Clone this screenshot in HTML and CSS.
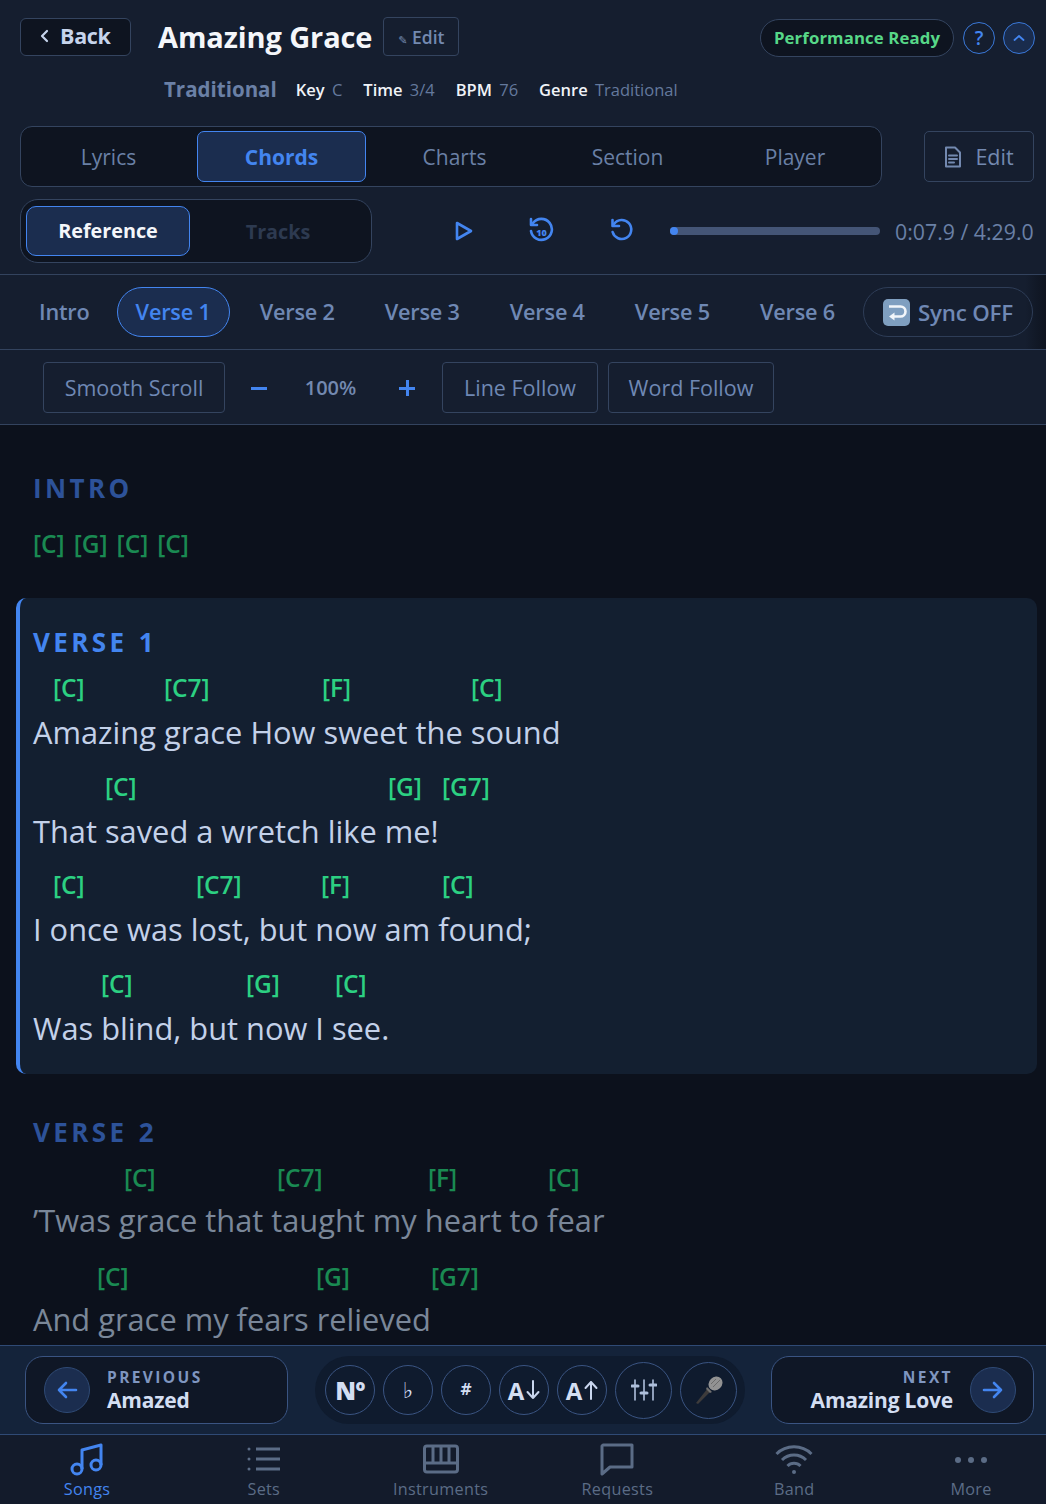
FILE: index.html
```html
<!DOCTYPE html>
<html><head>
<meta charset="utf-8">
<title>Amazing Grace</title>
<link rel="stylesheet" href="styles.css">
</head>
<body>
<div class="app">
  <header class="top">
    <div class="title-row">
      <button class="back-btn">
        <svg width="12" height="14" viewBox="0 0 12 14"><path d="M8 2 L3 7 L8 12" class="line-light"/></svg>
        Back
      </button>
      <h1 class="song-title">Amazing Grace</h1>
      <button class="title-edit"><span class="pencil">✎</span> Edit</button>
      <div class="title-right">
        <span class="ready-pill">Performance Ready</span>
        <button class="round-btn">?</button>
        <button class="round-btn round-fill">
          <svg width="14" height="10" viewBox="0 0 14 10"><path d="M2.5 7 L7 3 L11.5 7" class="line-blue line-fine"/></svg>
        </button>
      </div>
    </div>
    <div class="meta-row">
      <span class="artist">Traditional</span>
      <span class="meta"><b>Key</b> C</span>
      <span class="meta"><b>Time</b> 3/4</span>
      <span class="meta"><b>BPM</b> 76</span>
      <span class="meta"><b>Genre</b> Traditional</span>
    </div>
    <div class="tabs-row">
      <nav class="tabs">
        <a class="tab">Lyrics</a>
        <a class="tab active">Chords</a>
        <a class="tab">Charts</a>
        <a class="tab">Section</a>
        <a class="tab">Player</a>
      </nav>
      <button class="doc-edit">
        <svg width="18" height="22" viewBox="0 0 18 22"><path d="M2 1.5 H11 L16 6.5 V20.5 H2 Z M5 9.5 H13 M5 13 H13 M5 16.5 H10" class="line-muted"/></svg>
        Edit
      </button>
    </div>
    <div class="player-row">
      <div class="source-switch">
        <a class="source active">Reference</a>
        <a class="source">Tracks</a>
      </div>
      <div class="transport">
        <svg class="play" width="20" height="20" viewBox="0 0 20 20"><path d="M3 2 L17 10 L3 18 Z" class="line-blue"/></svg>
        <svg class="skip" width="26" height="28" viewBox="0 0 26 28">
          <path d="M5 6 A10.5 10.5 0 1 1 3 14" class="line-blue"/>
          <path d="M3 2 V8 H9" class="line-blue"/>
          <text x="13.5" y="18.5" class="skip-num">10</text>
        </svg>
        <svg class="undo" width="26" height="26" viewBox="0 0 26 26">
          <path d="M5 6 A9.5 9.5 0 1 1 3.6 14" class="line-blue"/>
          <path d="M3.5 2 V8 H10" class="line-blue"/>
        </svg>
      </div>
      <div class="progress"><span class="progress-dot"></span></div>
      <span class="time">0:07.9 / 4:29.0</span>
    </div>
  </header>

  <nav class="sections">
    <a class="section-link">Intro</a>
    <a class="section-link active">Verse 1</a>
    <a class="section-link">Verse 2</a>
    <a class="section-link">Verse 3</a>
    <a class="section-link">Verse 4</a>
    <a class="section-link">Verse 5</a>
    <a class="section-link">Verse 6</a>
    <button class="sync-btn">
      <svg width="27" height="27" viewBox="0 0 27 27">
        <rect width="27" height="27" rx="5" fill="#7f9fc0"/>
        <path d="M6 7.5 H17.5 A5 5 0 0 1 17.5 17.5 H8" fill="none" stroke="#f2f6fa" stroke-width="2.6"/>
        <path d="M11.5 13.5 L6 17.5 L11.5 21.5 Z M6 4 V11" fill="#f2f6fa"/>
      </svg>
      Sync OFF
    </button>
  </nav>

  <div class="scroll-tools">
    <button class="tool-btn tool-smooth">Smooth Scroll</button>
    <span class="step minus"></span>
    <span class="zoom-val">100%</span>
    <span class="step plus"></span>
    <button class="tool-btn tool-line">Line Follow</button>
    <button class="tool-btn tool-word">Word Follow</button>
  </div>

  <main class="sheet">
    <section class="block block-intro">
      <h2 class="block-name">INTRO</h2>
      <div class="intro-chords"><span>[C]</span><span>[G]</span><span>[C]</span><span>[C]</span></div>
    </section>

    <section class="block block-current">
      <h2 class="block-name">VERSE 1</h2>
      <div class="line">
        <div class="chords"><span style="margin-left:20px;width:111px">[C]</span><span style="width:158px">[C7]</span><span style="width:149px">[F]</span><span>[C]</span></div>
        <p class="lyric">Amazing grace How sweet the sound</p>
      </div>
      <div class="line">
        <div class="chords"><span style="margin-left:72px;width:283px">[C]</span><span style="width:54px">[G]</span><span>[G7]</span></div>
        <p class="lyric">That saved a wretch like me!</p>
      </div>
      <div class="line">
        <div class="chords"><span style="margin-left:20px;width:143px">[C]</span><span style="width:125px">[C7]</span><span style="width:121px">[F]</span><span>[C]</span></div>
        <p class="lyric">I once was lost, but now am found;</p>
      </div>
      <div class="line">
        <div class="chords"><span style="margin-left:68px;width:145px">[C]</span><span style="width:89px">[G]</span><span>[C]</span></div>
        <p class="lyric">Was blind, but now I see.</p>
      </div>
    </section>

    <section class="block block-next">
      <h2 class="block-name">VERSE 2</h2>
      <div class="line">
        <div class="chords"><span style="margin-left:91px;width:153px">[C]</span><span style="width:151px">[C7]</span><span style="width:120px">[F]</span><span>[C]</span></div>
        <p class="lyric">’Twas grace that taught my heart to fear</p>
      </div>
      <div class="line">
        <div class="chords"><span style="margin-left:64px;width:219px">[C]</span><span style="width:115px">[G]</span><span>[G7]</span></div>
        <p class="lyric">And grace my fears relieved</p>
      </div>
    </section>
  </main>

  <div class="song-bar">
    <button class="song-jump">
      <span class="jump-arrow"><svg width="22" height="18" viewBox="0 0 22 18"><path d="M20 9 H3 M10 2 L3 9 L10 16" class="line-blue"/></svg></span>
      <span class="jump-text"><small>PREVIOUS</small><strong>Amazed</strong></span>
    </button>
    <div class="keys">
      <button class="key key-no">Nº</button>
      <button class="key key-flat">♭</button>
      <button class="key key-sharp">#</button>
      <button class="key key-az">A<svg width="14" height="20" viewBox="0 0 14 20"><path d="M7 1 V18 M1.5 12 L7 18 L12.5 12" class="line-soft"/></svg></button>
      <button class="key key-az">A<svg width="14" height="20" viewBox="0 0 14 20"><path d="M7 19 V2 M1.5 8 L7 2 L12.5 8" class="line-soft"/></svg></button>
      <button class="key key-big">
        <svg width="26" height="24" viewBox="0 0 26 24">
          <path d="M4 2 V22 M13 2 V22 M22 2 V22" class="line-thin"/>
          <path d="M1 8 H7 M10 15 H16 M19 7 H25" class="line-thick"/>
        </svg>
      </button>
      <button class="key key-big">
        <svg width="32" height="32" viewBox="0 0 32 32">
          <path d="M3 29 L15 14 L18 17 L5 30 Z" fill="#3d3b3b"/>
          <path d="M14 13 L19 18 L17 19 L13 15 Z" fill="#6f6f6f"/>
          <ellipse cx="22.5" cy="9.5" rx="6.5" ry="7.5" transform="rotate(45 22.5 9.5)" fill="#929292"/>
          <path d="M18 10 L23 5 M20 13 L27 6" stroke="#6b6b6b" stroke-width="1"/>
        </svg>
      </button>
    </div>
    <button class="song-jump jump-next">
      <span class="jump-text"><small>NEXT</small><strong>Amazing Love</strong></span>
      <span class="jump-arrow"><svg width="22" height="18" viewBox="0 0 22 18"><path d="M2 9 H19 M12 2 L19 9 L12 16" class="line-blue"/></svg></span>
    </button>
  </div>

  <nav class="bottom-nav">
    <a class="nav-item active">
      <svg width="36" height="34" viewBox="0 0 36 34"><circle cx="8" cy="26" r="5" class="nav-ico"/><circle cx="27" cy="22" r="5" class="nav-ico"/><path d="M13 26 V7 L32 2 V22" class="nav-ico"/></svg>
      Songs
    </a>
    <a class="nav-item">
      <svg width="36" height="34" viewBox="0 0 36 34"><path d="M10 6 H34 M10 16 H34 M10 26 H34" class="nav-ico"/><circle cx="3" cy="6" r="1.5" class="nav-dot"/><circle cx="3" cy="16" r="1.5" class="nav-dot"/><circle cx="3" cy="26" r="1.5" class="nav-dot"/></svg>
      Sets
    </a>
    <a class="nav-item">
      <svg width="36" height="34" viewBox="0 0 36 34"><rect x="1.5" y="3" width="33" height="26" rx="2.5" class="nav-ico"/><path d="M1.5 20 H34.5 M10 3 V20 M18 3 V20 M26 3 V20" class="nav-ico"/></svg>
      Instruments
    </a>
    <a class="nav-item">
      <svg width="36" height="34" viewBox="0 0 36 34"><path d="M4 2 H33 V24 H11 L3 31 V3 Z" class="nav-ico"/></svg>
      Requests
    </a>
    <a class="nav-item">
      <svg width="38" height="34" viewBox="0 0 38 34"><path d="M1.5 11 A25 25 0 0 1 36.5 11 M7 17 A17 17 0 0 1 31 17 M12.5 23 A9 9 0 0 1 25.5 23" class="nav-ico"/><circle cx="19" cy="29" r="2" class="nav-dot"/></svg>
      Band
    </a>
    <a class="nav-item">
      <svg width="36" height="34" viewBox="0 0 36 34"><circle cx="5" cy="17" r="3" class="nav-dot"/><circle cx="18" cy="17" r="3" class="nav-dot"/><circle cx="31" cy="17" r="3" class="nav-dot"/></svg>
      More
    </a>
  </nav>
</div>
</body>
</html>
```

FILE: styles.css
```css
html, body {
  margin: 0;
  height: 100%;
}
body {
  background: #0c111c;
  font-family: "Open Sans", "Liberation Sans", sans-serif;
  color: #7389b0;
}
button {
  font-family: inherit;
  background: none;
  color: inherit;
  padding: 0;
  cursor: pointer;
}
h1, h2, p {
  margin: 0;
}
svg {
  display: block;
  flex: none;
}
.app {
  display: flex;
  flex-direction: column;
  height: 1504px;
  overflow: hidden;
}

/* svg strokes */
.line-blue, .line-light, .line-muted, .line-soft, .line-thin, .line-thick {
  fill: none;
  stroke-linecap: round;
  stroke-linejoin: round;
}
.line-blue { stroke: #4385f0; stroke-width: 2.6; }
.line-fine { stroke-width: 1.8; }
.line-light { stroke: #c6d4ec; stroke-width: 2.2; }
.line-muted { stroke: #7389b0; stroke-width: 2; }
.line-soft { stroke: #c9d6ee; stroke-width: 2; }
.line-thin { stroke: #aebfdb; stroke-width: 1.6; }
.line-thick { stroke: #aebfdb; stroke-width: 3; }

/* header */
.top {
  background: #151e2f;
  height: 275px;
  flex: none;
  padding: 17px 12px 0 20px;
  box-sizing: border-box;
  border-bottom: 1px solid #33435e;
}
.title-row {
  display: flex;
  align-items: center;
  height: 39px;
}
.back-btn {
  display: flex;
  align-items: center;
  gap: 9px;
  width: 111px;
  height: 38px;
  padding: 0 0 2px 18px;
  box-sizing: border-box;
  background: #0e1420;
  border: 1px solid #34445f;
  border-radius: 6px;
  color: #c6d4ec;
  font-size: 21.5px;
  font-weight: 700;
  letter-spacing: -0.3px;
}
.song-title {
  margin-left: 27px;
  color: #f4f6fa;
  font-size: 29px;
  font-weight: 700;
  letter-spacing: -0.1px;
  white-space: nowrap;
}
.title-edit {
  margin-left: 11px;
  width: 76px;
  height: 39px;
  border: 1px solid #34445f;
  border-radius: 4px;
  color: #7389b0;
  font-size: 17.5px;
  font-weight: 600;
}
.pencil {
  font-family: "DejaVu Sans", sans-serif;
  font-size: 11px;
}
.title-right {
  margin: 2px -1px 0 auto;
  display: flex;
  align-items: center;
  gap: 9px;
}
.ready-pill {
  display: flex;
  align-items: center;
  justify-content: center;
  width: 194px;
  height: 38px;
  box-sizing: border-box;
  background: #0e1420;
  border: 1px solid #34445f;
  border-radius: 19px;
  color: #57d888;
  font-size: 16.8px;
  font-weight: 700;
  letter-spacing: 0.1px;
}
.round-btn {
  width: 32px;
  height: 32px;
  display: flex;
  align-items: center;
  justify-content: center;
  border: 1px solid #3a78d8;
  border-radius: 50%;
  color: #4385f0;
  font-size: 19px;
  font-weight: 600;
}
.round-btn + .round-btn {
  margin-left: -1px;
}
.round-fill {
  background: #1a2c4d;
}
.meta-row {
  display: flex;
  align-items: center;
  height: 30px;
  margin: 18px 0 0 144px;
  gap: 21px;
}
.artist {
  margin-right: -2px;
  color: #6a80a6;
  font-size: 20.5px;
  font-weight: 700;
}
.meta {
  font-size: 16.5px;
  color: #64799d;
}
.meta b {
  color: #f0f3f8;
  font-weight: 600;
  margin-right: 3px;
}
.tabs-row {
  display: flex;
  align-items: center;
  justify-content: space-between;
  margin-top: 22px;
}
.tabs {
  display: grid;
  grid-template-columns: 169px 169px 169px 169px 158px;
  gap: 4px;
  width: 862px;
  height: 61px;
  box-sizing: border-box;
  padding: 4px 3px;
  background: #0e1420;
  border: 1px solid #34445f;
  border-radius: 12px;
}
.tab {
  display: flex;
  align-items: center;
  justify-content: center;
  color: #6a80a6;
  font-size: 21px;
  border: 1px solid transparent;
  border-radius: 7px;
}
.tab.active {
  background: #1b2d4f;
  border-color: #4385f0;
  color: #4385f0;
  font-weight: 700;
}
.doc-edit {
  display: flex;
  align-items: center;
  justify-content: center;
  gap: 13px;
  width: 110px;
  height: 51px;
  border: 1px solid #34445f;
  border-radius: 5px;
  color: #7389b0;
  font-size: 21.5px;
}
.player-row {
  display: flex;
  align-items: center;
  margin-top: 12px;
  height: 64px;
}
.source-switch {
  display: flex;
  align-items: center;
  width: 352px;
  height: 64px;
  box-sizing: border-box;
  padding: 0 5px;
  background: #0e1420;
  border: 1px solid #34445f;
  border-radius: 18px;
}
.source {
  flex: 1;
  text-align: center;
  color: #2d3a50;
  font-size: 19.8px;
  font-weight: 700;
}
.source.active {
  flex: none;
  width: 164px;
  height: 50px;
  line-height: 48px;
  box-sizing: border-box;
  background: #1b2d4f;
  border: 1px solid #4385f0;
  border-radius: 10px;
  color: #f4f6fa;
}
.transport {
  display: flex;
  align-items: center;
  margin-left: 82px;
  gap: 0;
}
.skip {
  margin-left: 54px;
}
.undo {
  margin-left: 55px;
}
.skip-num {
  fill: #4385f0;
  font-size: 9px;
  font-weight: 800;
  text-anchor: middle;
}
.progress {
  position: relative;
  margin-left: 35px;
  width: 210px;
  height: 8px;
  border-radius: 4px;
  background: #445576;
}
.progress-dot {
  position: absolute;
  left: 0;
  top: 0;
  width: 8px;
  height: 8px;
  border-radius: 50%;
  background: #4385f0;
}
.time {
  margin-left: 15px;
  color: #6a80a6;
  font-size: 21.3px;
  white-space: nowrap;
}

/* section links */
.sections {
  display: flex;
  align-items: center;
  height: 75px;
  box-sizing: border-box;
  padding-left: 19px;
  background: linear-gradient(to right, #151e2f 98%, #0e1420);
  border-bottom: 1px solid #33435e;
  flex: none;
}
.section-link {
  height: 50px;
  line-height: 48px;
  box-sizing: border-box;
  margin-right: 10px;
  padding: 0 19px;
  color: #6f88b4;
  font-size: 21.7px;
  font-weight: 600;
  border: 1px solid transparent;
  white-space: nowrap;
  letter-spacing: -0.2px;
}
.section-link:first-child {
  margin-right: 7px;
}
.section-link:nth-child(7) {
  margin-right: 0;
}
.section-link.active {
  padding: 0 18px;
  background: #1b2d4f;
  border-color: #4385f0;
  border-radius: 25px;
  color: #4385f0;
}
.sync-btn {
  display: flex;
  align-items: center;
  justify-content: center;
  gap: 8px;
  flex: none;
  margin-left: auto;
  margin-right: 13px;
  width: 170px;
  height: 50px;
  border: 1px solid #2e3d57;
  border-radius: 25px;
  color: #6f88b4;
  font-size: 22.3px;
  font-weight: 600;
  letter-spacing: -0.2px;
}

/* scroll tools */
.scroll-tools {
  display: flex;
  align-items: center;
  flex: none;
  height: 75px;
  box-sizing: border-box;
  padding-left: 43px;
  background: #151e2f;
  border-bottom: 1px solid #33435e;
}
.tool-btn {
  height: 51px;
  box-sizing: border-box;
  border: 1px solid #34445f;
  border-radius: 4px;
  color: #6f88b4;
  font-size: 21.5px;
}
.tool-smooth { width: 182px; }
.tool-line { width: 156px; margin-left: 27px; }
.tool-word { width: 166px; margin-left: 10px; }
.step {
  position: relative;
  width: 16px;
  height: 16px;
  flex: none;
}
.step::before, .plus::after {
  content: "";
  position: absolute;
  background: #4385f0;
}
.step::before {
  left: 0;
  top: 7px;
  width: 16px;
  height: 3px;
}
.plus::after {
  left: 6.5px;
  top: 0;
  width: 3px;
  height: 16px;
}
.minus { margin: 2px 0 0 26px; }
.plus { margin-top: 2px; }
.zoom-val {
  width: 127px;
  padding-right: 5px;
  text-align: center;
  color: #7389b0;
  font-size: 20px;
  font-weight: 600;
}

/* chord sheet */
.sheet {
  flex: 1;
  overflow: hidden;
  padding: 0 9px 0 16px;
  background: #0c111c;
}
.block-name {
  font-size: 26px;
  font-weight: 700;
  letter-spacing: 3.4px;
  word-spacing: 1px;
  line-height: 36px;
  color: #2d5299;
}
.block-intro {
  box-sizing: border-box;
  padding: 45px 0 0 17px;
  height: 127px;
}
.intro-chords {
  display: flex;
  gap: 9px;
  margin-top: 22px;
  color: #1a8a52;
  font-size: 24.5px;
  font-weight: 600;
  line-height: 32px;
}
.block-current {
  height: 476px;
  box-sizing: border-box;
  margin-top: 46px;
  padding: 26px 0 0 13px;
  background: #131f30;
  border-left: 4px solid #4385f0;
  border-radius: 10px;
}
.block-current .block-name {
  color: #4385f0;
}
.line {
  height: 98.7px;
}
.block-current .block-name + .line {
  margin-top: 12px;
}
.chords {
  display: flex;
  height: 32px;
  line-height: 32px;
  color: #2cd082;
  font-size: 24.5px;
  font-weight: 600;
  white-space: nowrap;
}
.chords span {
  flex: none;
}
.lyric {
  margin-top: 6px;
  height: 44px;
  line-height: 44px;
  color: #c3d1e9;
  font-size: 30.8px;
  white-space: nowrap;
}
.block-next {
  padding: 40px 0 0 17px;
}
.block-next .block-name + .line {
  margin-top: 12px;
}
.block-next .chords {
  color: #1a8a52;
}
.block-next .lyric {
  margin-top: 4px;
  color: #7a8799;
}
.block-next .line {
  height: 99px;
}

/* prev / next strip */
.song-bar {
  display: flex;
  align-items: center;
  flex: none;
  height: 90px;
  box-sizing: border-box;
  padding: 0 13px 0 25px;
  background: #14233a;
  border-top: 1px solid #2f4a75;
  border-bottom: 1px solid #2f4a75;
}
.song-jump {
  display: flex;
  align-items: center;
  gap: 17px;
  width: 263px;
  height: 68px;
  flex: none;
  box-sizing: border-box;
  padding-left: 18px;
  background: #0f1726;
  border: 1px solid #3a5482;
  border-radius: 18px;
  text-align: left;
}
.jump-next {
  justify-content: flex-end;
  padding: 0 17px 0 0;
  text-align: right;
}
.jump-arrow {
  display: flex;
  align-items: center;
  justify-content: center;
  width: 46px;
  height: 46px;
  flex: none;
  box-sizing: border-box;
  background: #1b2d4f;
  border: 1px solid #2f4a75;
  border-radius: 50%;
}
.jump-text {
  display: flex;
  flex-direction: column;
}
.jump-text small {
  color: #7f96c0;
  font-size: 15.5px;
  font-weight: 700;
  letter-spacing: 2.4px;
  line-height: 20px;
}
.jump-text strong {
  color: #d3def2;
  font-size: 21px;
  font-weight: 700;
  line-height: 26px;
  letter-spacing: -0.2px;
}
.keys {
  display: flex;
  align-items: center;
  gap: 8px;
  width: 430px;
  height: 68px;
  flex: none;
  box-sizing: border-box;
  margin: 0 26px 0 27px;
  padding-left: 10px;
  background: #0f1b2e;
  border-radius: 34px;
}
.key {
  display: flex;
  align-items: center;
  justify-content: center;
  gap: 2px;
  width: 50px;
  height: 50px;
  flex: none;
  box-sizing: border-box;
  border: 1px solid #3a5482;
  border-radius: 50%;
  color: #d3def2;
  font-size: 24px;
  font-weight: 700;
}
.key-no {
  font-size: 25px;
  font-weight: 800;
  letter-spacing: -0.5px;
}
.key-flat {
  font-family: "DejaVu Sans", sans-serif;
  font-size: 22px;
}
.key-sharp {
  font-family: "DejaVu Sans", sans-serif;
  font-size: 15px;
}
.key-big {
  width: 57px;
  height: 57px;
}

/* bottom nav */
.bottom-nav {
  display: flex;
  justify-content: space-between;
  flex: none;
  height: 69px;
  padding: 0 18px 0 30px;
  background: #131b2b;
}
.nav-item {
  display: flex;
  flex-direction: column;
  align-items: center;
  width: 114px;
  padding-top: 8px;
  color: #5b6c86;
  font-size: 16.2px;
  letter-spacing: 0.3px;
  line-height: 20px;
  --ico: #5b6c86;
}
.nav-item svg {
  margin-bottom: 2px;
}
.nav-item.active {
  color: #4385f0;
  --ico: #4385f0;
}
.nav-ico {
  fill: none;
  stroke: var(--ico);
  stroke-width: 3;
  stroke-linejoin: round;
}
.nav-dot {
  fill: var(--ico);
}
```
